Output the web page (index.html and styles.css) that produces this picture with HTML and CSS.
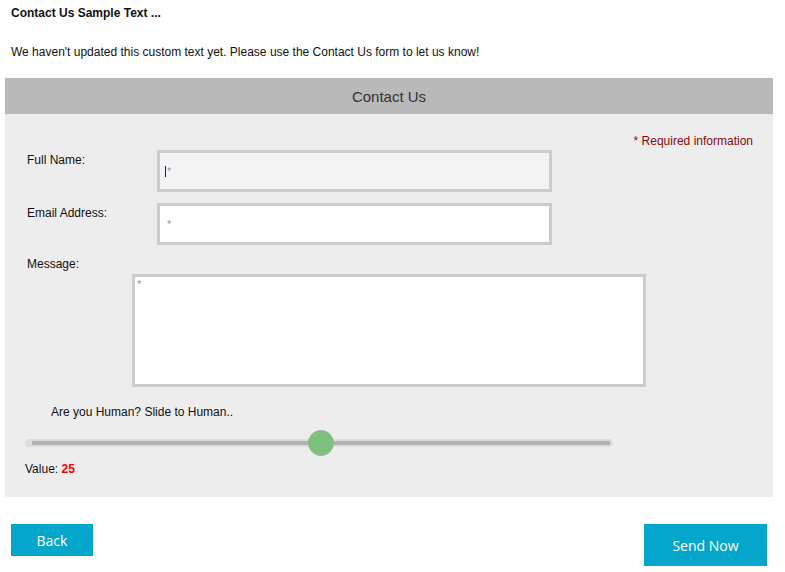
FILE: index.html
```html
<!DOCTYPE html>
<html lang="en">
<head>
<meta charset="utf-8">
<title>Contact Us</title>
<link rel="stylesheet" href="styles.css">
</head>
<body>
<div class="intro">
  <div class="intro-title">Contact Us Sample Text ...</div>
  <p class="intro-text">We haven't updated this custom text yet. Please use the Contact Us form to let us know!</p>
</div>

<div class="panel">
  <div class="panel-head">Contact Us</div>
  <div class="panel-body">
    <div class="required">* Required information</div>

    <div class="field-row">
      <label class="field-label" for="fullname">Full Name:</label>
      <div class="input-wrap caret">
        <input class="field-input focused" id="fullname" type="text" placeholder="*">
      </div>
    </div>

    <div class="field-row second">
      <label class="field-label" for="email">Email Address:</label>
      <div class="input-wrap">
        <input class="field-input" id="email" type="text" placeholder="*">
      </div>
    </div>

    <label class="msg-label" for="message">Message:</label>
    <textarea class="msg-input" id="message" placeholder="*"></textarea>

    <div class="human">Are you Human? Slide to Human..</div>
    <div class="slider">
      <div class="slider-track"><div class="slider-line"></div></div>
      <div class="slider-thumb"></div>
    </div>
    <div class="value">Value: <span class="value-num">25</span></div>
  </div>
</div>

<div class="actions">
  <button class="btn btn-back" type="button">Back</button>
  <button class="btn btn-send" type="button">Send Now</button>
</div>
</body>
</html>
```

FILE: styles.css
```css
html, body {
  margin: 0;
  padding: 0;
  background: #ffffff;
}

body {
  font-family: "Liberation Sans", Arial, sans-serif;
  font-size: 12px;
  color: #111111;
  width: 785px;
}

.intro {
  padding: 6px 11px 0 11px;
  height: 78px;
  box-sizing: border-box;
}

.intro-title {
  font-weight: bold;
  line-height: 15px;
}

.intro-text {
  margin: 24px 0 0 0;
  line-height: 15px;
}

.panel {
  margin: 0 12px 0 5px;
  background: #ededed;
}

.panel-head {
  height: 36px;
  background: #b9b9b9;
  color: #333333;
  font-size: 15px;
  line-height: 37px;
  text-align: center;
}

.panel-body {
  padding: 20px 20px 21px 22px;
  display: flex;
  flex-direction: column;
}

.required {
  text-align: right;
  color: #8b0a0a;
  line-height: 14px;
}

.field-row {
  display: flex;
  margin-top: 2px;
}

.field-row.second {
  margin-top: 11px;
}

.field-label {
  width: 130px;
  padding-top: 3px;
  line-height: 14px;
  color: #111111;
}

.input-wrap {
  position: relative;
}

.field-input {
  width: 395px;
  height: 42px;
  box-sizing: border-box;
  border: 3px solid #cccccc;
  background: #ffffff;
  padding: 0 7px;
  margin: 0;
  font-family: "Liberation Sans", Arial, sans-serif;
  font-size: 11px;
  outline: none;
  display: block;
}

.field-input.focused {
  background: #f3f3f3;
}

.field-input::placeholder,
.msg-input::placeholder {
  color: #8a9ab3;
  opacity: 1;
}

.caret::after {
  content: "";
  position: absolute;
  left: 8px;
  top: 16px;
  width: 1px;
  height: 11px;
  background: #222222;
}

.msg-label {
  margin-top: 12px;
  line-height: 14px;
}

.msg-input {
  margin: 3px 0 0 105px;
  width: 514px;
  height: 113px;
  box-sizing: border-box;
  border: 3px solid #cccccc;
  background: #ffffff;
  padding: 1px 2px;
  font-family: "Liberation Sans", Arial, sans-serif;
  font-size: 11px;
  outline: none;
  display: block;
  resize: none;
}

.human {
  margin: 18px 0 0 24px;
  line-height: 14px;
}

.slider {
  position: relative;
  margin: 11px 0 0 -2px;
  width: 588px;
  height: 26px;
  display: flex;
  align-items: center;
}

.slider-track {
  width: 100%;
  height: 8px;
  border-radius: 4px;
  background: #dcdcdc;
  display: flex;
  align-items: center;
  padding: 0 3px 0 7px;
  box-sizing: border-box;
}

.slider-line {
  flex: 1;
  height: 4px;
  background: #b2b2b2;
}

.slider-thumb {
  position: absolute;
  left: 283px;
  top: 0;
  width: 26px;
  height: 26px;
  border-radius: 50%;
  background: #7ec17e;
  box-sizing: border-box;
  border: 1px solid #8ab98a;
}

.value {
  margin: 6px 0 0 -2px;
  line-height: 14px;
}

.value-num {
  color: #ff0000;
  font-weight: bold;
}

.actions {
  display: flex;
  justify-content: space-between;
  align-items: flex-start;
  padding: 27px 18px 0 11px;
}

.btn {
  border: none;
  margin: 0;
  padding: 0;
  background: #04a6cc;
  color: #ffffff;
  font-family: "Open Sans", "Noto Sans", sans-serif;
  font-size: 14px;
  cursor: pointer;
}

.btn-back {
  width: 82px;
  height: 32px;
}

.btn-send {
  width: 123px;
  height: 42px;
}
```
